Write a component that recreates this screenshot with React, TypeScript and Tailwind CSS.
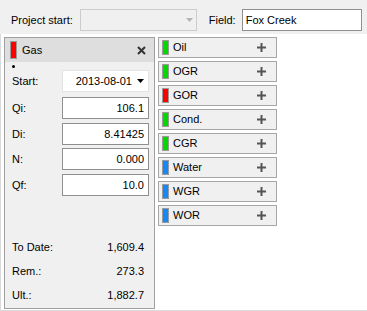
import React from "react";

type Series = { name: string; color: string };

const series: Series[] = [
  { name: "Oil", color: "bg-[#00d800]" },
  { name: "OGR", color: "bg-[#00d800]" },
  { name: "GOR", color: "bg-[#ff0000]" },
  { name: "Cond.", color: "bg-[#00d800]" },
  { name: "CGR", color: "bg-[#00d800]" },
  { name: "Water", color: "bg-[#1787f5]" },
  { name: "WGR", color: "bg-[#1787f5]" },
  { name: "WOR", color: "bg-[#1787f5]" },
];

const fields = [
  { label: "Qi:", value: "106.1", mt: "mt-[5px]" },
  { label: "Di:", value: "8.41425", mt: "mt-[4px]" },
  { label: "N:", value: "0.000", mt: "mt-[3px]" },
  { label: "Qf:", value: "10.0", mt: "mt-[4px]" },
];

const stats = [
  { label: "To Date:", value: "1,609.4" },
  { label: "Rem.:", value: "273.3" },
  { label: "Ult.:", value: "1,882.7" },
];

function Plus() {
  return (
    <svg width="9" height="9" viewBox="0 0 9 9">
      <rect x="3.5" y="0" width="2" height="9" fill="#555" />
      <rect x="0" y="3.5" width="9" height="2" fill="#555" />
    </svg>
  );
}

function Cross() {
  return (
    <svg width="9" height="9" viewBox="0 0 9 9">
      <path d="M1 1 L8 8 M8 1 L1 8" stroke="#333" strokeWidth="2" />
    </svg>
  );
}

function Caret({ color }: { color: string }) {
  return (
    <svg width="7" height="4" viewBox="0 0 7 4">
      <path d="M0 0 H7 L3.5 4 Z" fill={color} />
    </svg>
  );
}

export default function App() {
  return (
    <div
      className="w-[367px] h-[311px] bg-white text-[11px] text-black overflow-hidden"
      style={{ fontFamily: '"Liberation Sans", Arial, sans-serif' }}
    >
      {/* toolbar */}
      <div className="h-[34px] bg-[#f0f0f0] flex items-start pt-[9px] pl-[11px]">
        <span className="h-[22px] leading-[22px]">Project start:</span>
        <div className="ml-[7px] w-[117px] h-[22px] border border-[#cccccc] bg-[#f0f0f0] flex items-center justify-end pr-[3px]">
          <Caret color="#b4b4b4" />
        </div>
        <span className="ml-[12px] h-[22px] leading-[22px]">Field:</span>
        <div className="ml-[6px] w-[120px] h-[22px] border border-[#8f8f8f] bg-white flex items-center pl-[3px]">
          Fox Creek
        </div>
      </div>

      {/* body */}
      <div className="h-[277px] flex items-start pt-[3px] pl-[3px] gap-[3px] border-b border-l border-[#dadada]">
        {/* selected series panel */}
        <div className="w-[151px] h-[272px] border border-[#a0a0a0] bg-[#f0f0f0] flex flex-col">
          <div className="h-[24px] bg-[#dedede] flex items-center pl-[5px] pr-[8px]">
            <div className="w-[7px] h-[18px] bg-[#ff0000] border border-[#9a9a9a]" />
            <span className="ml-[5px]">Gas</span>
            <span className="ml-auto flex">
              <Cross />
            </span>
          </div>
          <div className="h-[3px] w-[3px] ml-[7px] mt-[3px] rounded-full bg-black" />
          <div className="flex flex-col pl-[7px] pr-[5px] mt-[2px]">
            <div className="flex items-center h-[22px]">
              <span className="w-[50px]">Start:</span>
              <div className="w-[87px] h-[22px] border border-[#e3e3e3] bg-white flex items-center justify-end pr-[4px]">
                <span>2013-08-01</span>
                <span className="ml-[5px] flex">
                  <Caret color="#000" />
                </span>
              </div>
            </div>
            {fields.map((f) => (
              <div key={f.label} className={`flex items-center h-[22px] ${f.mt}`}>
                <span className="w-[50px]">{f.label}</span>
                <div className="w-[87px] h-[22px] border border-[#8f8f8f] bg-white flex items-center justify-end pr-[4px]">
                  {f.value}
                </div>
              </div>
            ))}
          </div>
          <div className="mt-auto mb-[1px] flex flex-col pl-[7px] pr-[10px]">
            {stats.map((s) => (
              <div key={s.label} className="h-[24px] flex items-center justify-between">
                <span>{s.label}</span>
                <span>{s.value}</span>
              </div>
            ))}
          </div>
        </div>

        {/* available series */}
        <div className="w-[119px] flex flex-col gap-[3px]">
          {series.map((s) => (
            <div
              key={s.name}
              className="h-[21px] border border-[#a6a6a6] bg-[#f0f0f0] flex items-center pl-[3px] pr-[10px]"
            >
              <div className={`w-[7px] h-[15px] border border-[#9a9a9a] ${s.color}`} />
              <span className="ml-[4px]">{s.name}</span>
              <span className="ml-auto flex">
                <Plus />
              </span>
            </div>
          ))}
        </div>
      </div>
    </div>
  );
}
